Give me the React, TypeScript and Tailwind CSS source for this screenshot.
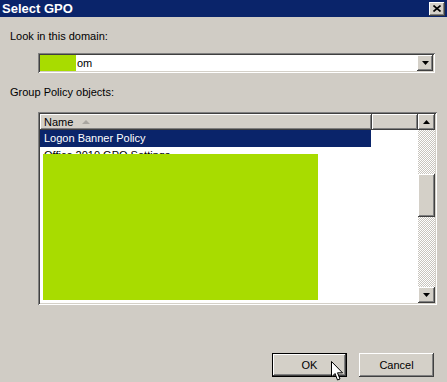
const raised =
  'bg-[#d4d0c8] shadow-[inset_-1px_-1px_#404040,inset_1px_1px_#ffffff,inset_-2px_-2px_#808080,inset_2px_2px_#d4d0c8]';
const sunken =
  'shadow-[inset_1px_1px_#808080,inset_-1px_-1px_#ffffff,inset_2px_2px_#404040,inset_-2px_-2px_#d4d0c8]';

const Arrow = ({ up = false }: { up?: boolean }) => (
  <svg width="7" height="4" viewBox="0 0 7 4" className={up ? '' : 'rotate-180'}>
    <path d="M3.5 0 L7 4 L0 4 Z" fill="#000" />
  </svg>
);

const ScrollBtn = ({ up = false }: { up?: boolean }) => (
  <div className={`${raised} h-[16px] w-[17px] flex items-center justify-center`}>
    <Arrow up={up} />
  </div>
);

export default function App() {
  return (
    <div className="relative w-[447px] h-[382px] bg-[#d0ccc5] overflow-hidden font-['Liberation_Sans',Arial,sans-serif] text-[11px] leading-[13px] text-black">
      {/* Title bar */}
      <div className="h-[17px] bg-[#0a246a] flex items-center justify-between pl-[2px] pr-[2px]">
        <span className="text-white font-bold text-[13px] leading-[17px]">Select GPO</span>
        <div className={`${raised} w-[16px] h-[14px] flex items-center justify-center`}>
          <svg width="8" height="7" viewBox="0 0 8 7">
            <path d="M0.5 0.5 L7.5 6.5 M7.5 0.5 L0.5 6.5" stroke="#000" strokeWidth="1.6" />
          </svg>
        </div>
      </div>

      <div className="pl-[10px] mt-[13px]">Look in this domain:</div>

      {/* Domain combo */}
      <div className={`${sunken} bg-white ml-[38px] mt-[10px] w-[397px] h-[20px] p-[2px] flex items-stretch`}>
        <div className="w-[36px] bg-[#a8dc00]" />
        <span className="flex-1 flex items-center pl-[1px]">om</span>
        <div className={`${raised} w-[16px] flex items-center justify-center`}>
          <Arrow />
        </div>
      </div>

      <div className="pl-[10px] mt-[13px]">Group Policy objects:</div>

      {/* List view */}
      <div className={`${sunken} bg-white relative ml-[38px] mt-[13px] w-[399px] h-[193px] p-[2px] flex`}>
        <div className="flex-1 flex flex-col">
          <div className="flex h-[16px]">
            <div className={`${raised} w-[332px] flex items-center pl-[4px] gap-[9px]`}>
              <span>Name</span>
              <svg width="8" height="4" viewBox="0 0 8 4">
                <path d="M4 0 L8 4 L0 4 Z" fill="#a9a6a0" />
              </svg>
            </div>
            <div className={`${raised} flex-1`} />
          </div>
          <div className="h-[17px] w-[331px] bg-[#0a246a] text-white flex items-center pl-[4px]">
            Logon Banner Policy
          </div>
          <div className="h-[17px] flex items-center pl-[4px]">Office 2010 GPO Settings</div>
          <div className="absolute left-[5px] top-[42px] w-[275px] h-[146px] bg-[#a8dc00]" />
        </div>
        <div className="w-[17px] flex flex-col">
          <ScrollBtn up />
          <div className="flex-1 bg-[repeating-conic-gradient(#c8c4bd_0%_25%,#ffffff_0%_50%)] bg-[length:2px_2px]">
            <div className={`${raised} mt-[44px] h-[43px]`} />
          </div>
          <ScrollBtn />
        </div>
      </div>

      {/* Buttons */}
      <div className="flex justify-end gap-[12px] pr-[13px] mt-[48px]">
        <div className="w-[75px] h-[24px] border border-black">
          <div className={`${raised} w-full h-full flex items-center justify-center`}>OK</div>
        </div>
        <div className={`${raised} w-[75px] h-[24px] flex items-center justify-center`}>Cancel</div>
      </div>

      {/* Mouse pointer */}
      <svg className="absolute left-[331px] top-[361px]" width="13" height="21" viewBox="0 0 13 21">
        <path
          d="M0.5 0.5 L0.5 16 L4 12.5 L6.5 19 L9 18 L6.5 11.8 L11.5 11.8 Z"
          fill="#fff"
          stroke="#000"
          strokeWidth="1"
          strokeLinejoin="miter"
        />
      </svg>
    </div>
  );
}
